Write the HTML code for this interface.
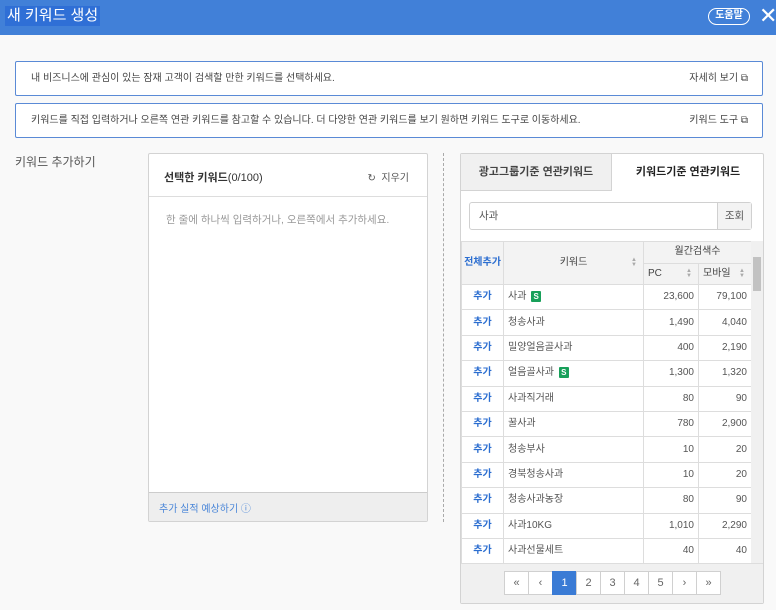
<!DOCTYPE html>
<html><head><meta charset="utf-8"><style>
*{box-sizing:border-box;margin:0;padding:0}
body{width:776px;height:610px;background:#f9f9f9;font-family:"Liberation Sans","Noto Sans CJK KR",sans-serif;font-size:11px;color:#333;position:relative;overflow:hidden}
.hd{position:absolute;left:0;top:0;width:776px;height:35px;background:#4180d8}
.hd .t{position:absolute;left:5px;top:6px;background:#2f6fd6;color:#fff;font-size:15px;padding:0 2px;line-height:20px}
.help{position:absolute;left:708px;top:8px;width:42px;height:17px;border:1.5px solid #fff;border-radius:9px;color:#fff;font-size:10px;font-weight:bold;text-align:center;line-height:14px}
.x{position:absolute;left:759px;top:4px;color:#fff;font-size:22px;line-height:24px;font-weight:300}
.info{position:absolute;left:15px;width:748px;height:35px;border:1px solid #5a8ad6;background:#fff;border-radius:2px;font-size:10px;color:#444;line-height:33px;padding-left:15px}
.info span{position:absolute;right:14px;top:0}
.lbl{position:absolute;left:15px;top:153px;font-size:12px;color:#555}
.lp{position:absolute;left:148px;top:153px;width:280px;height:369px;border:1px solid #d3d3d3;background:#fff;border-radius:2px}
.lp .h{height:43px;border-bottom:1px solid #ddd;padding:15px 0 0 15px;font-size:11px}
.lp .h b{font-weight:bold}
.lp .h span{position:absolute;right:18px;top:15px;font-size:10px;color:#555}
.lp .p{padding:15px 0 0 17px;color:#999;font-size:10.5px}
.lp .f{position:absolute;left:0;bottom:0;width:100%;height:29px;background:#eee;border-top:1px solid #ccc;color:#4a86d8;font-size:10px;padding:7px 0 0 10px}
.dash{position:absolute;left:443px;top:153px;height:369px;border-left:1px dashed #aaa}
.rp{position:absolute;left:460px;top:153px;width:304px;height:451px;border:1px solid #d3d3d3;background:#fff;border-radius:2px}
.tab1{position:absolute;left:0;top:0;width:151px;height:37px;background:#f0f0f0;border-bottom:1px solid #d3d3d3;border-right:1px solid #d3d3d3;font-size:11px;text-align:center;line-height:37px;color:#444;font-weight:bold}
.tab2{position:absolute;left:151px;top:0;width:152px;height:37px;font-size:11px;text-align:center;line-height:37px;font-weight:bold;color:#222}
.sr{position:absolute;left:8px;top:48px;width:283px;height:28px;border:1px solid #d0d0d0;border-radius:3px;font-size:10.5px;color:#555;line-height:26px;padding-left:9px}
.sr span{position:absolute;right:0;top:0;width:34px;height:26px;border-left:1px solid #d0d0d0;background:#f3f3f3;text-align:center}
.tb{position:absolute;left:0;top:87px;width:290px;height:323px;overflow:hidden}
table{border-collapse:collapse;font-size:10px;table-layout:fixed;width:290px}
td,th{border:1px solid #ddd;height:25.4px;padding:0 4px;white-space:nowrap;line-height:12px;position:relative}
th{background:#f3f3f3;font-weight:normal;color:#444;height:21.5px}
td.a{color:#2c6ed0;font-weight:bold;text-align:center}
td.n{text-align:right;color:#555}
td.k{color:#555}
.s{display:inline-block;width:10px;height:11px;background:#18a05a;color:#fff;font-size:8px;font-weight:bold;text-align:center;line-height:11px;border-radius:1px;vertical-align:top;margin-left:2px}
.sb{position:absolute;left:290px;top:87px;width:12px;height:323px;background:#f0f0f0}
.sb i{position:absolute;left:2px;top:16px;width:8px;height:34px;background:#c2c2c2}
.pg{position:absolute;left:0;top:409px;width:302px;height:40px;background:#f0f0f0;border-top:1px solid #ddd}
.pg div{position:absolute;top:7px;left:43px}
.pg span{position:absolute;top:0;width:25px;height:24px;border:1px solid #d0d0d0;background:#fff;text-align:center;line-height:22px;font-size:11px;color:#666}
.pg span.on{background:#3a7bd5;color:#fff;border-color:#3a7bd5}
.ar{position:absolute;right:6px;top:50%;margin-top:-5px;color:#aaa;font-size:6px;line-height:5px}
</style></head><body>
<div class="hd"><div class="t">새 키워드 생성</div><div class="help">도움말</div><div class="x">✕</div></div>
<div class="info" style="top:61px">내 비즈니스에 관심이 있는 잠재 고객이 검색할 만한 키워드를 선택하세요.<span>자세히 보기 ⧉</span></div>
<div class="info" style="top:103px">키워드를 직접 입력하거나 오른쪽 연관 키워드를 참고할 수 있습니다. 더 다양한 연관 키워드를 보기 원하면 키워드 도구로 이동하세요.<span>키워드 도구 ⧉</span></div>
<div class="lbl">키워드 추가하기</div>
<div class="lp"><div class="h"><b>선택한 키워드</b>(0/100)<span>↻ &nbsp;지우기</span></div><div class="p">한 줄에 하나씩 입력하거나, 오른쪽에서 추가하세요.</div><div class="f">추가 실적 예상하기 ⓘ</div></div>
<div class="dash"></div>
<div class="rp">
<div class="tab1">광고그룹기준 연관키워드</div><div class="tab2">키워드기준 연관키워드</div>
<div class="sr">사과<span>조회</span></div>
<div class="tb"><table>
<colgroup><col style="width:42px"><col style="width:140px"><col style="width:55px"><col style="width:53px"></colgroup>
<tr><th rowspan="2" style="color:#2c6ed0;font-weight:bold;padding:0">전체추가</th><th rowspan="2">키워드<span class="ar">▲<br>▼</span></th><th colspan="2">월간검색수</th></tr>
<tr><th style="text-align:left">PC<span class="ar">▲<br>▼</span></th><th style="text-align:left">모바일<span class="ar">▲<br>▼</span></th></tr>
<tr><td class="a">추가</td><td class="k">사과 <span class="s">S</span></td><td class="n">23,600</td><td class="n">79,100</td></tr>
<tr><td class="a">추가</td><td class="k">청송사과</td><td class="n">1,490</td><td class="n">4,040</td></tr>
<tr><td class="a">추가</td><td class="k">밀양얼음골사과</td><td class="n">400</td><td class="n">2,190</td></tr>
<tr><td class="a">추가</td><td class="k">얼음골사과 <span class="s">S</span></td><td class="n">1,300</td><td class="n">1,320</td></tr>
<tr><td class="a">추가</td><td class="k">사과직거래</td><td class="n">80</td><td class="n">90</td></tr>
<tr><td class="a">추가</td><td class="k">꿀사과</td><td class="n">780</td><td class="n">2,900</td></tr>
<tr><td class="a">추가</td><td class="k">청송부사</td><td class="n">10</td><td class="n">20</td></tr>
<tr><td class="a">추가</td><td class="k">경북청송사과</td><td class="n">10</td><td class="n">20</td></tr>
<tr><td class="a">추가</td><td class="k">청송사과농장</td><td class="n">80</td><td class="n">90</td></tr>
<tr><td class="a">추가</td><td class="k">사과10KG</td><td class="n">1,010</td><td class="n">2,290</td></tr>
<tr><td class="a">추가</td><td class="k">사과선물세트</td><td class="n">40</td><td class="n">40</td></tr>
</table></div>
<div class="sb"><i></i></div>
<div class="pg"><div><span style="left:0">«</span><span style="left:24px">‹</span><span class="on" style="left:48px">1</span><span style="left:72px">2</span><span style="left:96px">3</span><span style="left:120px">4</span><span style="left:144px">5</span><span style="left:168px">›</span><span style="left:192px">»</span></div></div>
</div>
</body></html>
